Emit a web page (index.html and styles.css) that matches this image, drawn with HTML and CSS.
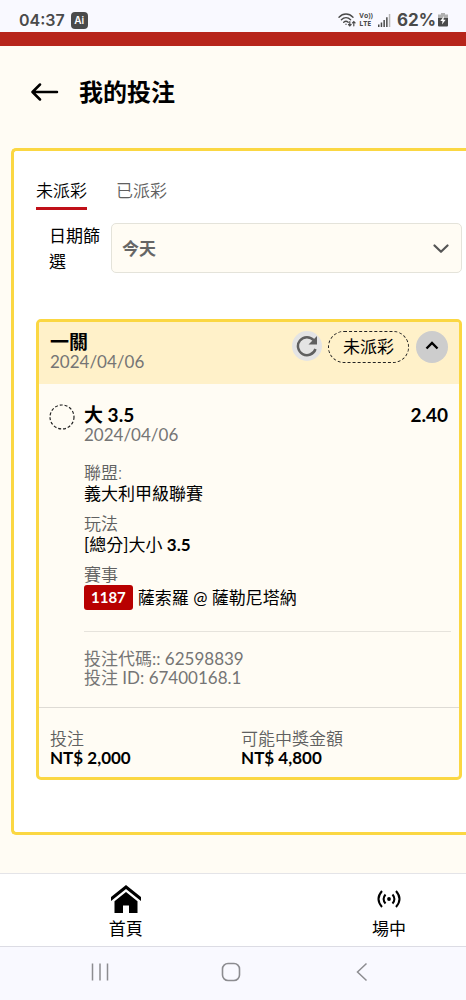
FILE: index.html
```html
<!DOCTYPE html>
<html lang="zh-Hant">
<head>
<meta charset="utf-8">
<meta name="viewport" content="width=device-width, initial-scale=1">
<title>我的投注</title>
<link rel="stylesheet" href="styles.css">
</head>
<body>
<div class="status">
  <span class="clock">04:37</span>
  <span class="ai">Ai</span>
  <div class="indicators">
    <svg width="18" height="14" viewBox="0 0 18 14" fill="none" stroke="#4a4a4a" stroke-width="1.4" stroke-linecap="round"><path d="M1 4.2C5 0 11 0 15 4.2M3.4 6.8c2.700-2.700 6.500-2.700 9.200 0M5.700 9.300c1.500-1.300 3.100-1.300 4.500 0"/><circle cx="8" cy="11.300" r=".7" fill="#4a4a4a" stroke="none"/><path stroke-width="1.200" d="M11.800 8.500v4.300m-1.300-1.300 1.300 1.300 1.300-1.300M15.800 12.800V8.500m-1.300 1.300 1.300-1.300 1.300 1.300"/></svg>
    <span class="volte"><span>Vo))</span><span>LTE</span></span>
    <svg width="13" height="13" viewBox="0 0 13 13" fill="#4a4a4a"><path d="M0 10.500h1.500V13H0zM2.700 8.500h1.500V13H2.700zM5.400 6h1.500v7H5.400zM8.100 3.300h1.500V13H8.100z"/><path fill="#b5b5b5" d="M10.800 0h1.500v13h-1.500z"/></svg>
    <span class="percent">62%</span>
    <svg width="10" height="14" viewBox="0 0 10 14"><path fill="#b0b0b0" d="M3 0h4v1.500h3V6H0V1.500h3z"/><path fill="#4a4a4a" d="M0 5h10v7.500q0 1-1 1H1q-1 0-1-1z"/><path fill="#fff" d="M6 3 2.300 8h2.200L4 11.500 7.700 6.700H5.500z"/></svg>
  </div>
</div>
<div class="brand-strip"></div>
<main class="main">
  <header class="page-head">
    <button class="back" type="button" aria-label="返回">
      <svg width="28" height="20" viewBox="0 0 28 20" fill="none" stroke="#000" stroke-width="2.500" stroke-linecap="round" stroke-linejoin="round"><path d="M26 10H2M9 2.500 1.500 10 9 17.500"/></svg>
    </button>
    <h1 class="title">我的投注</h1>
  </header>
  <section class="panel">
    <nav class="tabs">
      <button class="tab active" type="button">未派彩</button>
      <button class="tab" type="button">已派彩</button>
    </nav>
    <div class="filter">
      <label class="filter-label" for="date">日期篩選</label>
      <div class="select-wrap">
        <select class="select" id="date"><option>今天</option></select>
        <svg class="chevron" width="16" height="10" viewBox="0 0 16 10" fill="none" stroke="#555" stroke-width="2.200" stroke-linecap="round" stroke-linejoin="round"><path d="M1.500 1.500 8 7.800l6.500-6.300"/></svg>
      </div>
    </div>
    <article class="card">
      <header class="card-head">
        <div class="grow">
          <h2 class="name">一關</h2>
          <div class="date">2024/04/06</div>
        </div>
        <button class="round refresh" type="button" aria-label="重新整理">
          <svg width="22" height="22" viewBox="0 0 22 22"><path d="M17.800 5.300A9 9 0 1 0 19.500 14" fill="none" stroke="#606060" stroke-width="2.500"/><path d="M21 1v8.500h-8.500z" fill="#606060"/></svg>
        </button>
        <span class="pill">未派彩</span>
        <button class="round collapse" type="button" aria-label="收合">
          <svg width="14" height="12" viewBox="0 0 14 12" fill="none" stroke="#000" stroke-width="2.400"><path d="M1.500 7.500 7 2l5.500 5.500"/></svg>
        </button>
      </header>
      <div class="bet">
        <svg class="mark" width="26" height="26" viewBox="0 0 26 26" fill="none" stroke="#222" stroke-width="1.200" stroke-dasharray="3 1.900"><circle cx="13" cy="13" r="12"/></svg>
        <div class="grow">
          <div class="pick-row">
            <h3 class="name">大 3.5</h3>
            <strong class="odds">2.40</strong>
          </div>
          <div class="date">2024/04/06</div>
          <dl class="details">
            <div><dt>聯盟:</dt><dd>義大利甲級聯賽</dd></div>
            <div><dt>玩法</dt><dd>[總分]大小 <b>3.5</b></dd></div>
            <div><dt>賽事</dt><dd class="match"><span class="code">1187</span><span>薩索羅 @ 薩勒尼塔納</span></dd></div>
          </dl>
          <div class="ids">
            <div>投注代碼:: 62598839</div>
            <div>投注 ID: 67400168.1</div>
          </div>
        </div>
      </div>
      <dl class="totals">
        <div><dt>投注</dt><dd>NT$ 2,000</dd></div>
        <div><dt>可能中獎金額</dt><dd>NT$ 4,800</dd></div>
      </dl>
    </article>
  </section>
</main>
<nav class="bottom-nav">
  <a class="nav-item" href="#home">
    <svg width="30" height="28" viewBox="0 0 30 28"><path d="M15 0 30 12v4L15 4 0 16v-4z"/><path d="M15 7 26.500 16.200V28H18v-7.500h-6V28H3.500V16.200z"/></svg>
    <span>首頁</span>
  </a>
  <a class="nav-item" href="#live">
    <svg width="24" height="28" viewBox="0 0 24 28" fill="none" stroke="#000" stroke-width="2"><circle cx="12" cy="14" r="1.900" fill="#000" stroke="none"/><path d="M8.500 9.500q-3.800 4.500 0 9M15.500 9.500q3.800 4.500 0 9M5 6q-7 8 0 16M19 6q7 8 0 16"/></svg>
    <span>場中</span>
  </a>
</nav>
<div class="system-nav">
  <button class="sys" type="button" aria-label="最近"><svg width="20" height="20" viewBox="0 0 20 20" stroke="#8c8c90" stroke-width="1.500"><path d="M2.500 1.500v17M10 1.500v17M17.500 1.500v17"/></svg></button>
  <button class="sys" type="button" aria-label="主畫面"><svg width="20" height="20" viewBox="0 0 20 20" fill="none" stroke="#8c8c90" stroke-width="1.600"><rect x="1.500" y="1.500" width="17" height="17" rx="5.500"/></svg></button>
  <button class="sys" type="button" aria-label="上一頁"><svg width="20" height="20" viewBox="0 0 20 20" fill="none" stroke="#8c8c90" stroke-width="1.500"><path d="M14.500 1.500 5.500 10l9 8.500"/></svg></button>
</div>
</body>
</html>
```
FILE: styles.css
```css
* { box-sizing: border-box; }
body {
  margin: 0;
  min-height: 100vh;
  display: flex;
  flex-direction: column;
  background: #fffcf4;
  color: #000;
  font: 17px/21px Lato, "Noto Sans CJK TC", sans-serif;
}
h1, h2, h3, dl, dd { margin: 0; }
button { border: 0; padding: 0; background: none; font: inherit; color: inherit; }
svg { display: block; flex: none; }
.grow { flex: 1; min-width: 0; }

.status {
  display: flex;
  align-items: center;
  height: 32px;
  padding: 8px 18px 0 19px;
  background: #f9f9ff;
  color: #4a4a4a;
  font-family: Inter, sans-serif;
  font-weight: 600;
  font-size: 16px;
}
.ai {
  margin-left: 6px;
  width: 17px;
  border-radius: 4px;
  background: #4a4a4a;
  color: #fff;
  font-size: 10px;
  line-height: 17px;
  text-align: center;
}
.indicators { display: flex; align-items: center; margin-left: auto; }
.volte { display: flex; flex-direction: column; margin: 0 5px 0 3px; font: 700 7px/8px "Open Sans", sans-serif; }
.percent { margin: 0 2px 0 6px; font-size: 17px; font-weight: 700; }
.brand-strip { height: 14px; background: #b7251b; }

.main { flex: 1; padding-bottom: 38px; }
.page-head { display: flex; align-items: center; gap: 20px; height: 102px; padding: 0 31px 10px; }
.title { font-size: 24px; line-height: 36px; font-weight: 700; }

.panel {
  margin-left: 11px;
  padding: 29px 4px 52px 22px;
  border: 3px solid #fbd742;
  border-right: 0;
  border-radius: 5px 0 0 5px;
  background: #fff;
}
.tabs { display: flex; gap: 29px; }
.tab { padding-bottom: 5px; border-bottom: 3px solid transparent; line-height: 22px; color: #606060; font-weight: 350; }
.tab.active { border-color: #c01018; color: #000; }
.filter { display: flex; gap: 10px; padding-left: 13px; margin-top: 13px; }
.filter-label { width: 52px; line-height: 26px; }
.select-wrap { position: relative; flex: 1; }
.select {
  appearance: none;
  width: 100%;
  height: 50px;
  padding: 0 10px;
  border: 1px solid #e4e3da;
  border-radius: 5px;
  background: #fffcf4;
  color: #666;
  font: inherit;
  font-weight: 700;
}
.chevron { position: absolute; right: 13px; top: 21px; pointer-events: none; }

.card { margin-top: 44px; border: 3px solid #fbd742; border-radius: 5px; background: #fffcf4; overflow: hidden; }
.card-head { display: flex; padding: 9px 11px 12px; background: #fff1c9; }
.name { font-size: 19px; line-height: 21px; font-weight: 700; }
.date { font-size: 17px; line-height: 20px; color: #757575; }
.round { display: flex; align-items: center; justify-content: center; border-radius: 50%; }
.refresh { width: 30px; height: 30px; background: #e4e4e4; }
.pill { height: 32px; margin: 0 7px 0 6px; padding: 0 14px; border: 1px dashed #222; border-radius: 16px; line-height: 30px; }
.collapse { width: 32px; height: 32px; background: #cdcdcd; }

.bet { display: flex; gap: 9px; padding: 20px 8px 20px 10px; }
.pick-row { display: flex; justify-content: space-between; padding-right: 3px; }
.odds { font-size: 19px; }
dt { color: #606060; font-weight: 350; }
.details { display: grid; gap: 9px; margin-top: 17px; padding-bottom: 21px; border-bottom: 1px solid #e6e3dc; }
.match { display: flex; align-items: center; gap: 5px; }
.code { padding: 0 7px; border-radius: 3px; background: #b80000; color: #fff; font-size: 15px; font-weight: 700; line-height: 25px; }
.ids { margin-top: 17px; line-height: 19px; color: #757575; }
.totals { display: grid; grid-template-columns: 48% 52%; padding: 21px 11px 10px; border-top: 1px solid #dedbd5; line-height: 19px; }
.totals dd { font-weight: 700; }

.bottom-nav { display: flex; height: 73px; border-top: 1px solid #e4e4e8; background: #fff; overflow: hidden; }
.nav-item { flex: 0 0 54%; display: flex; flex-direction: column; align-items: center; gap: 5px; padding-top: 11px; color: #000; text-decoration: none; }
.nav-item + .nav-item { flex-basis: 59%; }
.system-nav { display: flex; align-items: center; justify-content: space-between; height: 54px; padding: 0 94px 4px 90px; border-top: 1px solid #dcdce4; background: #f9f9ff; }
```
